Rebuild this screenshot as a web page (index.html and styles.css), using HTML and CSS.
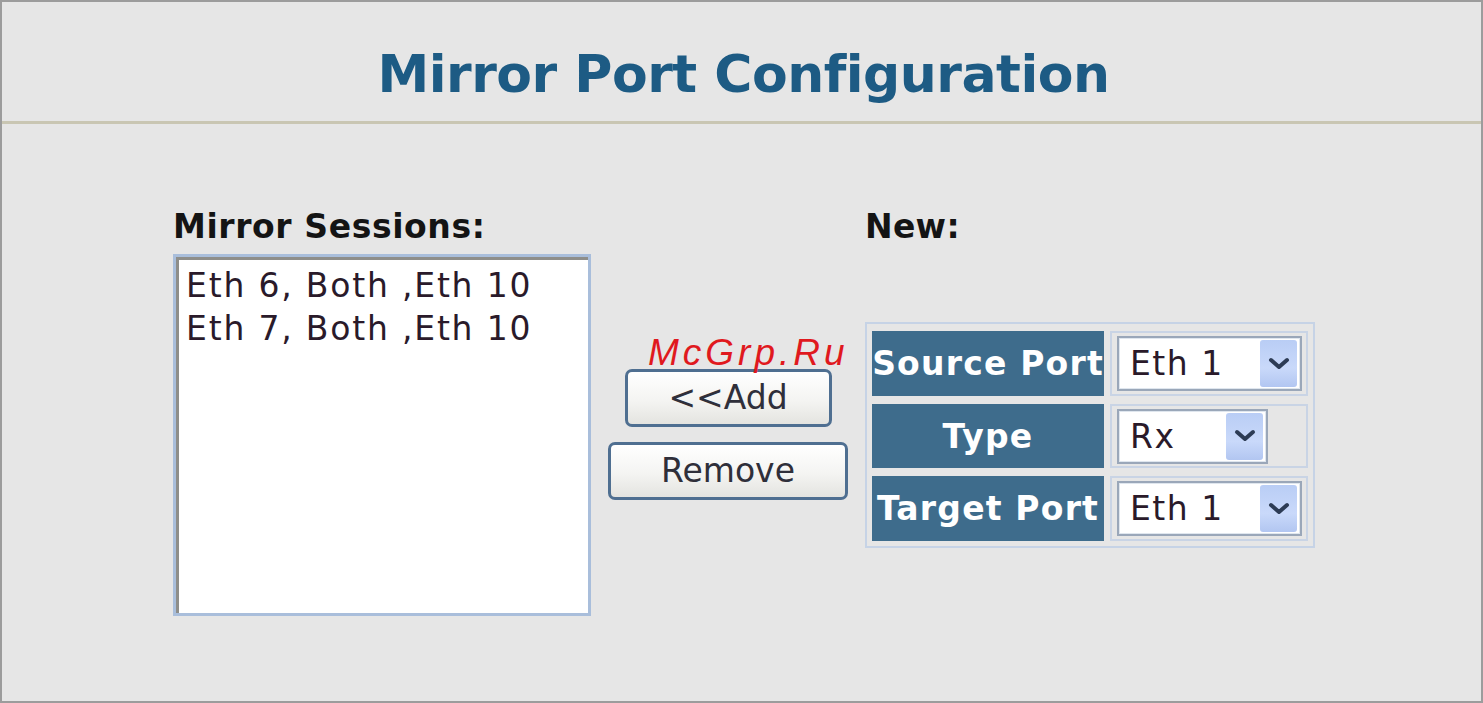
FILE: index.html
```html
<!DOCTYPE html>
<html>
<head>
<meta charset="utf-8">
<title>Mirror Port Configuration</title>
<link rel="stylesheet" href="styles.css">
</head>
<body>
<div class="frame">
  <div class="header">
    <h1 class="title">Mirror Port Configuration</h1>
  </div>
  <div class="content">
    <div class="col-left">
      <div class="label label-sessions">Mirror Sessions:</div>
      <div class="listbox">
        <div class="listinner">
          <div class="item">Eth 6, Both ,Eth 10</div>
          <div class="item">Eth 7, Both ,Eth 10</div>
        </div>
      </div>
    </div>
    <div class="col-mid">
      <button class="btn btn-add">&lt;&lt;Add</button>
      <button class="btn btn-remove">Remove</button>
    </div>
    <div class="col-right">
      <div class="label">New:</div>
      <div class="ptable">
        <div class="th">Source Port</div>
        <div class="td">
          <div class="sel sel-wide">
            <span class="sel-text">Eth 1</span>
            <span class="sel-btn"><svg width="24" height="16" viewBox="0 0 24 16"><path d="M4 4 L12 11 L20 4" fill="none" stroke="#2d3c55" stroke-width="4" stroke-linecap="round" stroke-linejoin="round"/></svg></span>
          </div>
        </div>
        <div class="th">Type</div>
        <div class="td">
          <div class="sel sel-narrow">
            <span class="sel-text">Rx</span>
            <span class="sel-btn"><svg width="24" height="16" viewBox="0 0 24 16"><path d="M4 4 L12 11 L20 4" fill="none" stroke="#2d3c55" stroke-width="4" stroke-linecap="round" stroke-linejoin="round"/></svg></span>
          </div>
        </div>
        <div class="th">Target Port</div>
        <div class="td">
          <div class="sel sel-wide">
            <span class="sel-text">Eth 1</span>
            <span class="sel-btn"><svg width="24" height="16" viewBox="0 0 24 16"><path d="M4 4 L12 11 L20 4" fill="none" stroke="#2d3c55" stroke-width="4" stroke-linecap="round" stroke-linejoin="round"/></svg></span>
          </div>
        </div>
      </div>
    </div>
  </div>
  <div class="watermark">McGrp.Ru</div>
</div>
</body>
</html>
```
FILE: styles.css
```css
html, body {
  margin: 0;
  padding: 0;
  background: #e6e6e6;
}
.frame {
  position: relative;
  width: 1483px;
  height: 703px;
  box-sizing: border-box;
  border: 2px solid #9c9c9c;
  background: #e6e6e6;
  font-family: "DejaVu Sans", Verdana, sans-serif;
  overflow: hidden;
}
.header {
  height: 119px;
  border-bottom: 3px solid #c9c6b3;
  box-sizing: content-box;
}
.title {
  margin: 0;
  padding-top: 46px;
  padding-left: 4px;
  font-size: 52px;
  line-height: 52px;
  font-weight: bold;
  text-align: center;
  color: #1d5b84;
  letter-spacing: -0.5px;
}
.content {
  display: flex;
  align-items: flex-start;
  gap: 17px;
  padding-left: 171px;
  margin-top: 86px;
}
.label {
  font-size: 33px;
  line-height: 33px;
  font-weight: bold;
  color: #141414;
  white-space: nowrap;
  letter-spacing: 0.3px;
}
.label-sessions {
  letter-spacing: 0.6px;
}
.col-left {
  width: 418px;
}
.listbox {
  margin-top: 11px;
  width: 418px;
  height: 362px;
  box-sizing: border-box;
  border: 3px solid #a9bedb;
  background: #ffffff;
}
.listinner {
  height: 100%;
  box-sizing: border-box;
  border-top: 3px solid #8e8e8a;
  border-left: 3px solid #8e8e8a;
  padding: 4px 0 0 7px;
}
.item {
  font-size: 33px;
  line-height: 43px;
  color: #2a1a2a;
  white-space: nowrap;
  letter-spacing: 1.8px;
}
.col-mid {
  width: 240px;
  margin-top: 159px;
  display: flex;
  flex-direction: column;
  align-items: center;
  gap: 15px;
}
.btn {
  height: 58px;
  box-sizing: border-box;
  border: 3px solid #4f6f91;
  border-radius: 7px;
  background: linear-gradient(#ffffff, #f4f4f2 55%, #e4e4e0);
  font-family: "DejaVu Sans", Verdana, sans-serif;
  font-size: 33px;
  color: #2f2f3a;
  padding: 0;
  line-height: 50px;
}
.btn-add {
  width: 207px;
}
.btn-remove {
  width: 240px;
}
.col-right {
  display: flex;
  flex-direction: column;
}
.ptable {
  margin-top: 79px;
  display: grid;
  grid-template-columns: 232px 198px;
  grid-template-rows: 65px 64px 65px;
  column-gap: 6px;
  row-gap: 8px;
  padding: 7px 5px 5px 5px;
  border: 2px solid #c6d3e6;
}
.th {
  background: #3e6c8c;
  color: #ffffff;
  font-weight: bold;
  font-size: 33px;
  display: flex;
  align-items: center;
  justify-content: center;
  white-space: nowrap;
  letter-spacing: 1.2px;
}
.td {
  border: 2px solid #c9d4e5;
  box-sizing: border-box;
  display: flex;
  align-items: center;
  padding-left: 5px;
}
.sel {
  height: 55px;
  box-sizing: border-box;
  border: 2px solid #9aa7b9;
  box-shadow: inset 0 0 0 1px #dfe6ee;
  background: #ffffff;
  display: flex;
  align-items: center;
  justify-content: space-between;
  padding: 2px 3px 2px 11px;
}
.sel-wide {
  width: 185px;
}
.sel-narrow {
  width: 151px;
}
.sel-text {
  font-size: 33px;
  color: #2a1a2a;
  letter-spacing: 1.5px;
}
.sel-btn {
  width: 37px;
  height: 100%;
  border-radius: 3px;
  background: linear-gradient(#b9cdf5, #c9d9fa 60%, #b2c6f1);
  display: flex;
  align-items: center;
  justify-content: center;
}
.watermark {
  position: absolute;
  left: 646px;
  top: 332px;
  font-family: "Liberation Sans", Arial, sans-serif;
  font-style: italic;
  font-size: 37px;
  line-height: 37px;
  letter-spacing: 4px;
  color: #e0191e;
}
```
